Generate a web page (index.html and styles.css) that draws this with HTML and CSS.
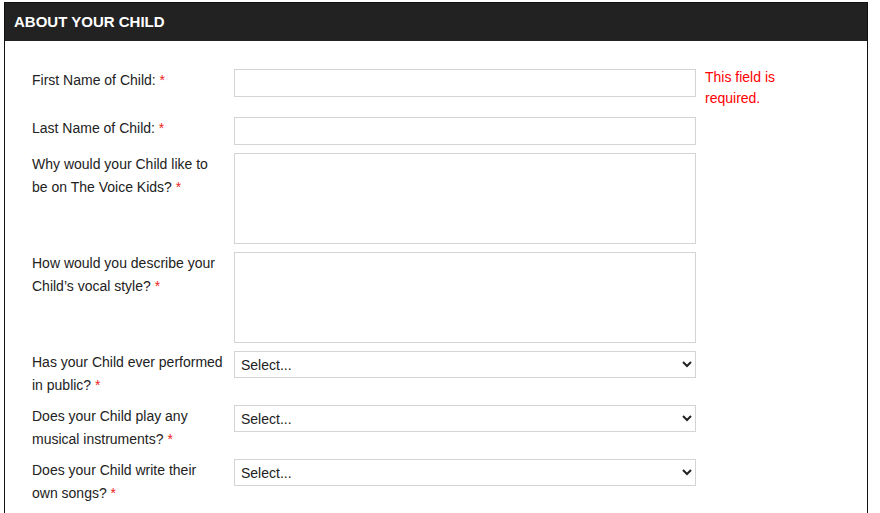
FILE: index.html
```html
<!DOCTYPE html>
<html>
<head>
<meta charset="utf-8">
<link rel="stylesheet" href="styles.css">
</head>
<body>
<div class="panel">
  <div class="panel-head">ABOUT YOUR CHILD</div>
  <form class="panel-body">
    <div class="row row-first">
      <label class="lbl">First Name of Child: <span class="req">*</span></label>
      <input class="field" type="text">
      <div class="err">This field is<br>required.</div>
    </div>
    <div class="row">
      <label class="lbl">Last Name of Child: <span class="req">*</span></label>
      <input class="field" type="text">
    </div>
    <div class="row">
      <label class="lbl">Why would your Child like to be on The Voice Kids? <span class="req">*</span></label>
      <textarea class="field area"></textarea>
    </div>
    <div class="row">
      <label class="lbl">How would you describe your Child’s vocal style? <span class="req">*</span></label>
      <textarea class="field area"></textarea>
    </div>
    <div class="row">
      <label class="lbl">Has your Child ever performed in public? <span class="req">*</span></label>
      <select class="field sel"><option>Select...</option></select>
    </div>
    <div class="row">
      <label class="lbl">Does your Child play any musical instruments? <span class="req">*</span></label>
      <select class="field sel"><option>Select...</option></select>
    </div>
    <div class="row">
      <label class="lbl">Does your Child write their own songs? <span class="req">*</span></label>
      <select class="field sel"><option>Select...</option></select>
    </div>
  </form>
</div>
</body>
</html>
```

FILE: styles.css
```css
html, body {
  margin: 0;
  padding: 0;
  background: #fff;
  font-family: "Liberation Sans", Arial, sans-serif;
}

.panel {
  margin: 2px 0 0 4px;
  width: 864px;
  box-sizing: border-box;
  border: 1px solid #111;
  border-bottom: none;
  min-height: 520px;
}

.panel-head {
  background: #222;
  color: #fff;
  font-weight: bold;
  font-size: 15px;
  height: 38px;
  line-height: 38px;
  padding-left: 9px;
}

.panel-body {
  padding: 28px 0 0 27px;
  margin: 0;
}

.row {
  display: flex;
  align-items: flex-start;
  margin-bottom: 8px;
}

.row-first {
  min-height: 40px;
}

.lbl {
  width: 202px;
  flex: none;
  font-size: 14px;
  line-height: 23px;
  color: #222;
  box-sizing: border-box;
  padding-right: 10px;
}

.req {
  color: #e22;
}

.field {
  flex: none;
  width: 462px;
  height: 28px;
  box-sizing: border-box;
  border: 1px solid #d4d4d4;
  border-radius: 0;
  background: #fff;
  margin: 0;
  font-family: "Liberation Sans", Arial, sans-serif;
  font-size: 14px;
  color: #222;
  padding: 0 6px;
  outline: none;
}

.area {
  height: 91px;
  resize: none;
}

.sel {
  height: 27px;
  padding: 0 2px;
}

.err {
  margin: -2px 0 0 9px;
  color: #f00;
  font-size: 14px;
  line-height: 21px;
}
```
